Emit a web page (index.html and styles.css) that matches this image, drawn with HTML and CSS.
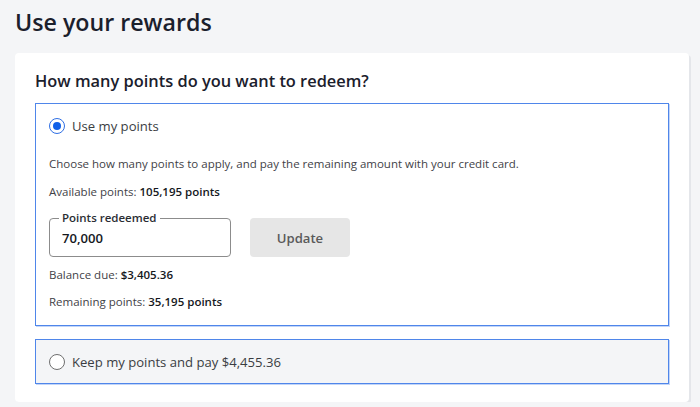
FILE: index.html
```html
<!DOCTYPE html>
<html lang="en">
<head>
<meta charset="utf-8">
<title>Use your rewards</title>
<link rel="stylesheet" href="styles.css">
</head>
<body>
  <main class="page">
    <h1 class="page-title">Use your rewards</h1>

    <section class="card">
      <h2 class="card-title">How many points do you want to redeem?</h2>

      <div class="option option--selected">
        <label class="option-head">
          <span class="radio radio--checked"></span>
          <span class="option-label">Use my points</span>
        </label>

        <div class="option-body">
          <p class="line">Choose how many points to apply, and pay the remaining amount with your credit card.</p>
          <p class="line line--gap">Available points: <strong>105,195 points</strong></p>

          <div class="redeem-row">
            <fieldset class="field">
              <legend class="field-legend">Points redeemed</legend>
              <input class="field-input" type="text" value="70,000">
            </fieldset>
            <button class="btn-update" type="button">Update</button>
          </div>

          <p class="line line--after-field">Balance due: <strong>$3,405.36</strong></p>
          <p class="line line--tight">Remaining points: <strong>35,195 points</strong></p>
        </div>
      </div>

      <div class="option option--muted">
        <label class="option-head option-head--short">
          <span class="radio"></span>
          <span class="option-label">Keep my points and pay $4,455.36</span>
        </label>
      </div>
    </section>
  </main>
</body>
</html>
```

FILE: styles.css
```css
* {
  box-sizing: border-box;
}

body {
  margin: 0;
  background: #f4f5f7;
  font-family: "Open Sans", "Noto Sans", sans-serif;
  color: #1b202c;
}

.page {
  padding: 6px 11px 0 15px;
}

.page-title {
  margin: 0;
  font-size: 23.2px;
  font-weight: 600;
  line-height: 32px;
  color: #1b202c;
}

.card {
  margin-top: 15px;
  background: #fff;
  border-radius: 4px;
  box-shadow: 2px 2px 0 #e4e6ea;
  padding: 17px 20px 18px;
}

.card-title {
  margin: 0 0 11px;
  font-size: 16.4px;
  font-weight: 600;
  line-height: 22px;
  color: #1b202c;
}

.option {
  border: 1px solid #4f86ea;
  box-shadow: 1px 1px 0 rgba(79, 134, 234, 0.35);
}

.option + .option {
  margin-top: 13px;
}

.option--muted {
  background: #f4f5f7;
}

.option-head {
  display: flex;
  align-items: center;
  gap: 7px;
  height: 44px;
  padding: 0 13px;
}

.option-head--short {
  height: 43px;
}

.radio {
  width: 16px;
  height: 16px;
  border-radius: 50%;
  border: 1.5px solid #6f6f6f;
  background: #fff;
  display: flex;
  align-items: center;
  justify-content: center;
  flex: none;
}

.radio--checked {
  border-color: #2f6fe4;
}

.radio--checked::after {
  content: "";
  width: 8px;
  height: 8px;
  border-radius: 50%;
  background: #0f5fe8;
}

.option-label {
  font-size: 13.1px;
  line-height: 20px;
  color: #3a3d42;
}

.option-body {
  padding: 7px 13px 14px;
}

.line {
  margin: 0;
  font-size: 11.5px;
  line-height: 18px;
  color: #3f4247;
}

.line strong {
  font-weight: 600;
  color: #15181d;
}

.line--gap {
  margin-top: 10px;
}

.redeem-row {
  display: flex;
  align-items: flex-end;
  gap: 19px;
  margin-top: 9px;
}

.field {
  width: 182px;
  margin: 0;
  padding: 0 9px 7px;
  border: 1px solid #8c8c8c;
  border-radius: 4px;
}

.field-legend {
  padding: 0 3px;
  font-size: 11.5px;
  font-weight: 600;
  line-height: 16px;
  color: #2a2d33;
}

.field-input {
  display: block;
  width: 100%;
  height: 23px;
  padding: 0 3px;
  border: 0;
  outline: none;
  background: transparent;
  font-family: inherit;
  font-size: 13.1px;
  font-weight: 600;
  color: #15181d;
}

.btn-update {
  width: 100px;
  height: 39px;
  border: 0;
  border-radius: 4px;
  background: #e6e6e6;
  font-family: inherit;
  font-size: 13.1px;
  font-weight: 600;
  color: #5a5a5a;
}

.line--after-field {
  margin-top: 9px;
}

.line--tight {
  margin-top: 9px;
}
```
